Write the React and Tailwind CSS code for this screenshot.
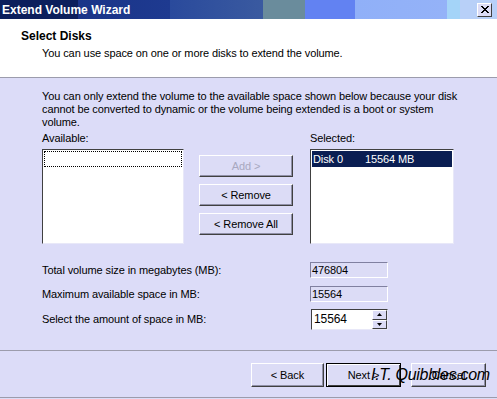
import React from "react";

function Btn({ children, disabled, isDefault, className = "" }) {
  return (
    <button
      className={
        "flex items-center justify-center bg-[#dcdcf6] text-[11px] leading-none " +
        (isDefault
          ? "border border-black shadow-[inset_1px_1px_#ffffff,inset_-1px_-1px_#404040] "
          : "border border-t-white border-l-white border-r-[#404040] border-b-[#404040] shadow-[inset_-1px_-1px_#9090a8] ") +
        (disabled ? "text-[#a8a8c0] " : "text-black ") +
        className
      }
    >
      {children}
    </button>
  );
}

function Field({ value }) {
  return (
    <div className="w-[78px] h-[16px] border border-t-[#8080a0] border-l-[#8080a0] border-r-white border-b-white bg-[#dcdcf6] text-[11px] leading-[14px] pl-[1px] text-black">
      {value}
    </div>
  );
}

export default function App() {
  return (
    <div
      className="w-[497px] h-[399px] flex flex-col bg-[#dcdcf8] overflow-hidden relative tracking-[-0.1px]"
      style={{ fontFamily: "'Liberation Sans', Arial, sans-serif" }}
    >
      <div className="h-[19px] flex items-center pl-[2px] pr-[5px] bg-[linear-gradient(90deg,#0c1f5c_0px,#0c1f5c_78px,#1a3488_78px,#1e3a90_170px,#2a4a9c_170px,#3a5aa0_263px,#6a8c9c_263px,#6a8c9c_305px,#6282f2_305px,#6282f2_355px,#90b0f8_355px,#94b2f8_447px,#a4d4f8_447px,#a4d4f8_460px,#b8d0f8_460px)]">
        <span className="text-white font-bold text-[12px] leading-none tracking-normal">
          Extend Volume Wizard
        </span>
        <div className="ml-auto w-[15px] h-[14px] bg-[#dcdcf6] border border-t-white border-l-white border-r-[#404040] border-b-[#404040] flex items-center justify-center">
          <svg width="8" height="7" viewBox="0 0 8 7">
            <path d="M0 0 L7 7 M1 0 L8 7 M7 0 L0 7 M8 0 L1 7" stroke="black" strokeWidth="1" />
          </svg>
        </div>
      </div>

      <div className="h-[59px] bg-white border-b border-[#9c9cac] pt-[10px] pl-[21px]">
        <div className="text-[12px] font-bold text-black leading-[14px] tracking-normal">Select Disks</div>
        <div className="text-[11px] text-black leading-[14px] pl-[21px] mt-[3px]">
          You can use space on one or more disks to extend the volume.
        </div>
      </div>

      <div className="flex-1 flex flex-col pl-[42px] pt-[12px] text-[11px] text-black">
        <p className="leading-[13px] whitespace-nowrap">
          You can only extend the volume to the available space shown below because your disk
          <br />
          cannot be converted to dynamic or the volume being extended is a boot or system
          <br />
          volume.
        </p>

        <div className="flex mt-[3px]">
          <div className="flex flex-col w-[142px]">
            <div className="leading-[12px] h-[17px]">Available:</div>
            <div className="h-[95px] bg-white border border-t-[#404040] border-l-[#404040] border-r-[#e8e8f8] border-b-[#e8e8f8] p-[1px]">
              <div className="h-[16px] border border-dotted border-black" />
            </div>
          </div>

          <div className="flex flex-col gap-[7px] ml-[15px] pt-[23px]">
            <Btn disabled className="w-[94px] h-[22px]">Add &gt;</Btn>
            <Btn className="w-[94px] h-[22px]">&lt; Remove</Btn>
            <Btn className="w-[94px] h-[22px]">&lt; Remove All</Btn>
          </div>

          <div className="flex flex-col w-[144px] ml-[17px]">
            <div className="leading-[12px] h-[17px]">Selected:</div>
            <div className="h-[95px] bg-white border border-t-[#404040] border-l-[#404040] border-r-[#e8e8f8] border-b-[#e8e8f8] p-[1px]">
              <div className="h-[16px] bg-[#0a1e52] text-white flex items-center leading-none">
                <span className="w-[53px] pl-[1px]">Disk 0</span>
                <span>15564 MB</span>
              </div>
            </div>
          </div>
        </div>

        <div className="flex flex-col gap-[7px] mt-[18px] pr-[109px]">
          <div className="flex items-center justify-between">
            <span>Total volume size in megabytes (MB):</span>
            <Field value="476804" />
          </div>
          <div className="flex items-center justify-between">
            <span>Maximum available space in MB:</span>
            <Field value="15564" />
          </div>
          <div className="flex items-center justify-between">
            <span>Select the amount of space in MB:</span>
            <div className="w-[77px] h-[21px] flex bg-white border border-t-[#404040] border-l-[#404040] border-r-[#e8e8f8] border-b-[#e8e8f8]">
              <div className="flex-1 leading-[19px] pl-[2px] text-[12px]">15564</div>
              <div className="w-[15px] flex flex-col">
                <div className="flex-1 bg-[#dcdcf6] border border-t-white border-l-white border-r-[#404040] border-b-[#404040] flex items-center justify-center">
                  <svg width="5" height="3" viewBox="0 0 5 3"><path d="M2.5 0 L5 3 L0 3 Z" fill="black" /></svg>
                </div>
                <div className="flex-1 bg-[#dcdcf6] border border-t-white border-l-white border-r-[#404040] border-b-[#404040] flex items-center justify-center">
                  <svg width="5" height="3" viewBox="0 0 5 3"><path d="M0 0 L5 0 L2.5 3 Z" fill="black" /></svg>
                </div>
              </div>
            </div>
          </div>
        </div>
      </div>

      <div className="h-[47px] border-t border-[#9c9cac] flex items-start pt-[12px] pl-[251px]">
        <Btn className="w-[73px] h-[24px]">&lt; Back</Btn>
        <Btn isDefault className="w-[75px] h-[24px] ml-[2px]">Next &gt;</Btn>
        <Btn className="w-[75px] h-[24px] ml-[10px]">Cancel</Btn>
      </div>
      <div className="h-[2px] border-t border-[#9c9cac]" />

      <span className="absolute left-[371px] top-[367px] text-[16px] italic text-black leading-none tracking-[-0.3px] whitespace-nowrap">
        I.T. Quibbles.com
      </span>
    </div>
  );
}
